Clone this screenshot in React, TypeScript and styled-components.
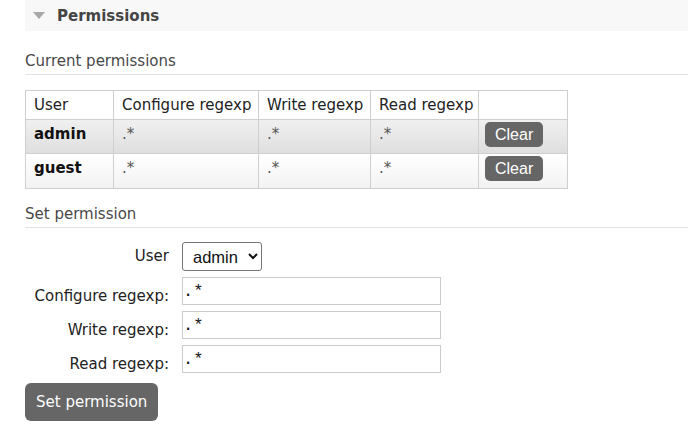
import React from "react";
import styled, { createGlobalStyle } from "styled-components";

const Global = createGlobalStyle`
  html, body { margin: 0; padding: 0; background: #fff; }
  body { font-family: "DejaVu Sans", Verdana, sans-serif; font-size: 15px; color: #444; }
`;

const Page = styled.div`
  padding-left: 25px;
  width: 663px;
`;

const SectionBar = styled.div`
  height: 31px;
  background: #f8f8f8;
  display: flex;
  align-items: center;
  padding-left: 8px;
`;

const Triangle = styled.span`
  width: 0;
  height: 0;
  border-left: 6px solid transparent;
  border-right: 6px solid transparent;
  border-top: 7px solid #a8a8a8;
  margin-right: 12px;
`;

const SectionTitle = styled.h2`
  margin: 0;
  font-size: 15px;
  line-height: 18px;
  font-weight: bold;
  color: #444;
`;

const SubHeading = styled.h3<{ $top: number }>`
  margin: ${(p) => p.$top}px 0 0;
  font-size: 15px;
  line-height: 18px;
  font-weight: normal;
  color: #484848;
  padding-bottom: 4px;
  border-bottom: 1px solid #e2e2e2;
`;

const PermTable = styled.table`
  margin-top: 15px;
  border-collapse: collapse;
  table-layout: fixed;
  width: 542px;
  border: 1px solid #cfcfcf;
`;

const Col = styled.col<{ $w: number }>`
  width: ${(p) => p.$w}px;
`;

const HeadCell = styled.th`
  text-align: left;
  font-weight: normal;
  color: #222;
  padding: 5px 8px 5px 8px;
  line-height: 18px;
  border: 1px solid #cfcfcf;
  white-space: nowrap;
`;

const Row = styled.tr<{ $alt: boolean }>`
  background: ${(p) =>
    p.$alt
      ? "linear-gradient(to bottom, #f0f0f0, #dedede)"
      : "linear-gradient(to bottom, #ffffff, #f2f2f2)"};
`;

const Cell = styled.td`
  vertical-align: top;
  padding: 5px 8px 5px 8px;
  line-height: 18px;
  border: 1px solid #cfcfcf;
  color: #555;
  white-space: nowrap;
`;

const UserCell = styled(Cell)`
  font-weight: bold;
  color: #111;
`;

const ButtonCell = styled(Cell)<{ $bottom: number }>`
  padding: 2px 6px ${(p) => p.$bottom}px 6px;
`;

const SmallButton = styled.button`
  display: block;
  height: 25px;
  padding: 0 10px;
  border: none;
  border-radius: 5px;
  background: #666;
  color: #fff;
  font-family: "Liberation Sans", Arial, sans-serif;
  font-size: 16px;
  line-height: 25px;
  cursor: pointer;
`;

const Form = styled.div`
  margin-top: 14px;
  display: grid;
  grid-template-columns: 144px auto;
  column-gap: 13px;
  row-gap: 6px;
  align-items: start;
  justify-content: start;
`;

const Label = styled.label<{ $pad: number }>`
  text-align: right;
  color: #222;
  line-height: 18px;
  padding-top: ${(p) => p.$pad}px;
`;

const Select = styled.select`
  width: 80px;
  height: 29px;
  box-sizing: border-box;
  font-family: "Liberation Sans", Arial, sans-serif;
  font-size: 16.5px;
  color: #111;
  border: 1px solid #767676;
  border-radius: 3px;
  background: #fff;
  padding: 0 2px 0 6px;
  justify-self: start;
`;

const TextInput = styled.input`
  width: 259px;
  height: 28px;
  box-sizing: border-box;
  border: 1px solid #cbcbcb;
  padding: 0 1px 0 0;
  font-family: "Liberation Mono", "Courier New", monospace;
  font-size: 17px;
  color: #111;
  outline: none;
`;

const BigButton = styled.button`
  margin-top: 10px;
  height: 38px;
  padding: 0 11px;
  border: none;
  border-radius: 6px;
  background: #666;
  color: #fff;
  font-family: "DejaVu Sans", Verdana, sans-serif;
  font-size: 15px;
  cursor: pointer;
`;

const perms = [
  { user: "admin", c: ".*", w: ".*", r: ".*" },
  { user: "guest", c: ".*", w: ".*", r: ".*" },
];

export default function App() {
  return (
    <>
      <Global />
      <Page>
        <SectionBar>
          <Triangle />
          <SectionTitle>Permissions</SectionTitle>
        </SectionBar>

        <SubHeading $top={21}>Current permissions</SubHeading>
        <PermTable>
          <colgroup>
            <Col $w={88} />
            <Col $w={145} />
            <Col $w={112} />
            <Col $w={108} />
            <Col $w={89} />
          </colgroup>
          <thead>
            <tr>
              <HeadCell>User</HeadCell>
              <HeadCell>Configure regexp</HeadCell>
              <HeadCell>Write regexp</HeadCell>
              <HeadCell>Read regexp</HeadCell>
              <HeadCell></HeadCell>
            </tr>
          </thead>
          <tbody>
            {perms.map((p, i) => (
              <Row key={p.user} $alt={i % 2 === 0}>
                <UserCell>{p.user}</UserCell>
                <Cell>{p.c}</Cell>
                <Cell>{p.w}</Cell>
                <Cell>{p.r}</Cell>
                <ButtonCell $bottom={i === 0 ? 6 : 7}>
                  <SmallButton>Clear</SmallButton>
                </ButtonCell>
              </Row>
            ))}
          </tbody>
        </PermTable>

        <SubHeading $top={16}>Set permission</SubHeading>
        <Form>
          <Label $pad={5}>User</Label>
          <Select defaultValue="admin">
            <option value="admin">admin</option>
            <option value="guest">guest</option>
          </Select>
          <Label $pad={10}>Configure regexp:</Label>
          <TextInput defaultValue=".*" />
          <Label $pad={10}>Write regexp:</Label>
          <TextInput defaultValue=".*" />
          <Label $pad={10}>Read regexp:</Label>
          <TextInput defaultValue=".*" />
        </Form>
        <BigButton>Set permission</BigButton>
      </Page>
    </>
  );
}
